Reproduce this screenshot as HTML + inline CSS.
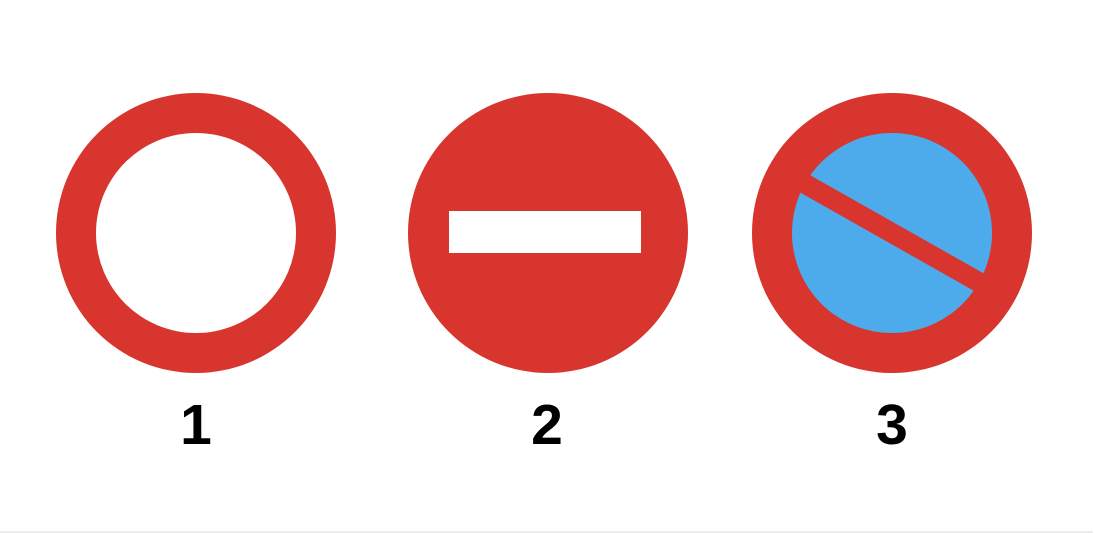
<!DOCTYPE html>
<html><head><style>
html,body{margin:0;padding:0;background:#fff;width:1094px;height:533px;overflow:hidden;position:relative}
.n{position:absolute;top:392px;font:bold 57px "Liberation Sans",Arial,sans-serif;color:#000;width:100px;text-align:center;line-height:66px}
.line{position:absolute;left:0;top:531px;width:1093px;height:2px;background:#ececec}
</style></head><body>
<svg width="1094" height="533" style="position:absolute;left:0;top:0">
<circle cx="196" cy="233" r="140" fill="#d8352f"/>
<circle cx="196" cy="233" r="100" fill="#fff"/>
<circle cx="548" cy="233" r="140" fill="#d8352f"/>
<rect x="449" y="211" width="192" height="42" fill="#fff"/>
<circle cx="892" cy="233" r="140" fill="#d8352f"/>
<circle cx="892" cy="233" r="100" fill="#4dabec"/>
<rect x="782" y="223" width="220" height="20" fill="#d8352f" transform="rotate(29.5 892 233)"/>
</svg>
<div class="n" style="left:146px">1</div>
<div class="n" style="left:497px">2</div>
<div class="n" style="left:842px">3</div>
<div class="line"></div>
</body></html>
